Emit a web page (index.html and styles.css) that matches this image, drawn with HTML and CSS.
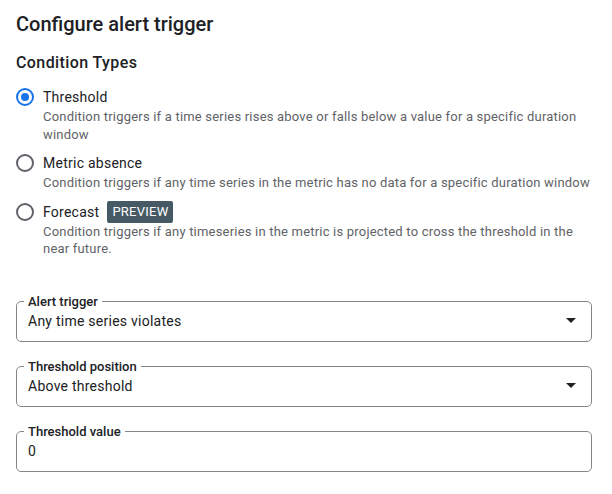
FILE: index.html
```html
<!DOCTYPE html>
<html lang="en">
<head>
<meta charset="utf-8">
<title>Configure alert trigger</title>
<link rel="stylesheet" href="styles.css">
</head>
<body>
<main class="panel">
  <h1 class="title">Configure alert trigger</h1>
  <h2 class="subtitle">Condition Types</h2>
  <div class="options">
    <div class="option">
      <span class="radio radio-on"></span>
      <div class="option-text">
        <div class="option-label">Threshold</div>
        <div class="option-desc">Condition triggers if a time series rises above or falls below a value for a specific duration window</div>
      </div>
    </div>
    <div class="option">
      <span class="radio"></span>
      <div class="option-text">
        <div class="option-label">Metric absence</div>
        <div class="option-desc">Condition triggers if any time series in the metric has no data for a specific duration window</div>
      </div>
    </div>
    <div class="option">
      <span class="radio"></span>
      <div class="option-text">
        <div class="option-label">Forecast <span class="chip">PREVIEW</span></div>
        <div class="option-desc">Condition triggers if any timeseries in the metric is projected to cross the threshold in the near future.</div>
      </div>
    </div>
  </div>
  <div class="fields">
    <fieldset class="field">
      <legend class="field-label">Alert trigger</legend>
      <div class="field-row"><span>Any time series violates</span><span class="caret"></span></div>
    </fieldset>
    <fieldset class="field">
      <legend class="field-label">Threshold position</legend>
      <div class="field-row"><span>Above threshold</span><span class="caret"></span></div>
    </fieldset>
    <fieldset class="field">
      <legend class="field-label">Threshold value</legend>
      <div class="field-row"><span>0</span></div>
    </fieldset>
  </div>
</main>
</body>
</html>
```
FILE: styles.css
```css
* { box-sizing: border-box; }
html, body { margin: 0; padding: 0; background: #fff; }
body {
  font-family: Roboto, "Liberation Sans", Arial, sans-serif;
  color: #202124;
  width: 612px;
}
.panel { padding: 10px 16px 0 16px; }
.title {
  margin: 0;
  font-size: 20px;
  line-height: 28px;
  font-weight: 500;
}
.subtitle {
  margin: 13px 0 0;
  font-size: 16px;
  line-height: 24px;
  font-weight: 500;
  letter-spacing: 0.4px;
}
.options {
  margin-top: 12px;
  display: flex;
  flex-direction: column;
  gap: 10px;
}
.option { display: flex; align-items: flex-start; }
.radio {
  flex: none;
  width: 18px;
  height: 18px;
  margin: 1px 9px 0 0;
  border: 2px solid #5f6368;
  border-radius: 50%;
  position: relative;
}
.radio-on { border-color: #1a73e8; }
.radio-on::after {
  content: "";
  position: absolute;
  left: 3px; top: 3px;
  width: 8px; height: 8px;
  border-radius: 50%;
  background: #1a73e8;
}
.option-label {
  font-size: 14px;
  line-height: 20px;
  height: 20px;
  letter-spacing: 0.25px;
  display: flex;
  align-items: center;
  gap: 8px;
}
.chip {
  background: #455a64;
  color: #fff;
  font-size: 13px;
  line-height: 22px;
  letter-spacing: 0.25px;
  padding: 0 5px;
  margin-top: 1px;
  border-radius: 2px;
}
.option-desc {
  margin-top: 1px;
  font-size: 13px;
  line-height: 17.5px;
  letter-spacing: 0.2px;
  color: #5f6368;
}
.fields {
  margin: 37px 4px 0 0;
  display: flex;
  flex-direction: column;
  gap: 18px;
}
.field {
  margin: 0;
  padding: 2px 15px 10px 11px;
  border: 1px solid #80868b;
  border-radius: 5px;
  min-width: 0;
}
.field-label {
  margin-left: -4px;
  padding: 0 4px;
  font-size: 13px;
  line-height: 14px;
  font-weight: 500;
}
.field-row {
  display: flex;
  justify-content: space-between;
  align-items: center;
  font-size: 14px;
  line-height: 20px;
  letter-spacing: 0.25px;
}
.caret {
  width: 0; height: 0;
  border-left: 5px solid transparent;
  border-right: 5px solid transparent;
  border-top: 5px solid #202124;
}
```
